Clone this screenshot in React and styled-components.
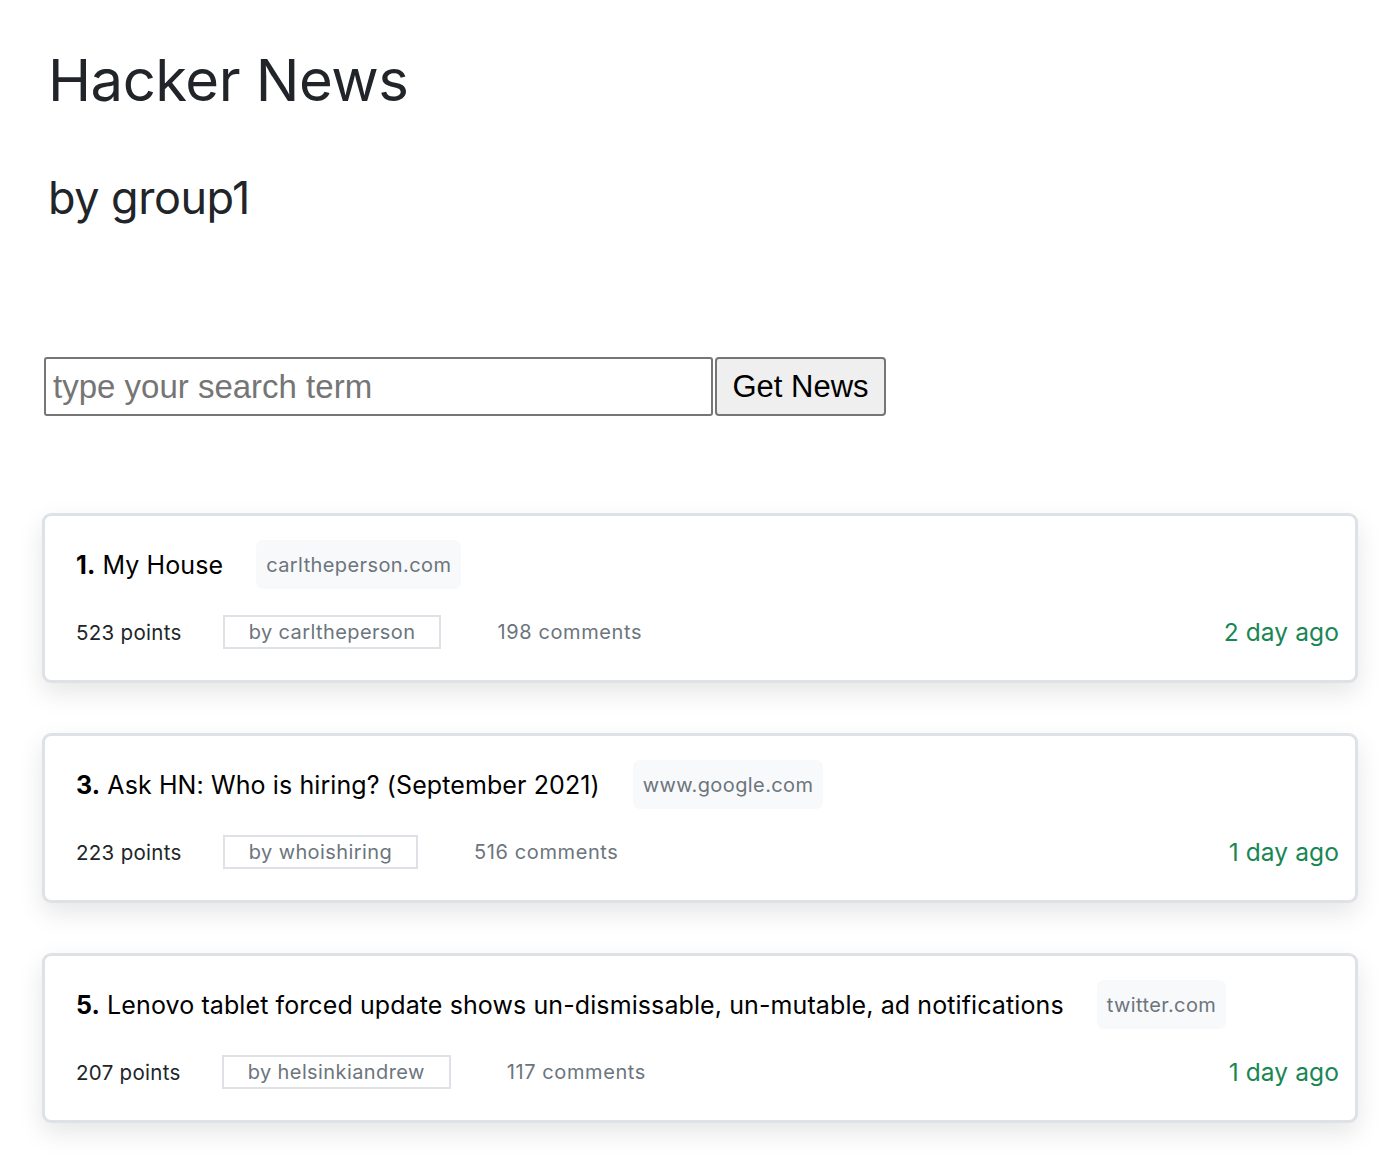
import React from "react";
import styled, { createGlobalStyle } from "styled-components";

const Global = createGlobalStyle`
  html, body { margin: 0; padding: 0; background: #fff; }
  body { font-family: Inter, "Noto Sans", sans-serif; color: #212529; }
  * { box-sizing: border-box; }
`;

const Page = styled.div`
  padding: 40px 32px 60px 42px;
  display: flex;
  flex-direction: column;
`;

const Title = styled.h1`
  margin: 0 0 0 6px;
  font-size: 58px;
  font-weight: 400;
  line-height: 80px;
  letter-spacing: -0.5px;
`;

const Subtitle = styled.h2`
  margin: 50px 0 0 6px;
  font-size: 45px;
  font-weight: 400;
  line-height: 56px;
  letter-spacing: -0.5px;
`;

const SearchForm = styled.form`
  display: flex;
  margin: 131px 0 0 2px;
`;

const SearchInput = styled.input`
  width: 669px;
  height: 59px;
  border: 2px solid #767676;
  border-radius: 3px;
  padding: 0 7px;
  font-family: "Liberation Sans", Arial, sans-serif;
  font-size: 33px;
  color: #212529;
  &::placeholder { color: #757575; }
`;

const SearchButton = styled.button`
  height: 59px;
  width: 171px;
  margin-left: 2px;
  border: 2px solid #767676;
  border-radius: 4px;
  background: #efefef;
  font-family: "Liberation Sans", Arial, sans-serif;
  font-size: 31px;
  color: #000;
  padding: 0 14px;
`;

const List = styled.div`
  display: flex;
  flex-direction: column;
  gap: 50px;
  margin-top: 97px;
`;

const Card = styled.div`
  width: 1316px;
  height: 170px;
  border: 3px solid #dee2e6;
  border-radius: 9px;
  background: #fff;
  box-shadow: 0 10px 26px rgba(0, 0, 0, 0.1);
  padding: 24px 16px 0 31px;
  display: flex;
  flex-direction: column;
`;

const TitleRow = styled.div`
  display: flex;
  align-items: center;
  gap: 33px;
  height: 49px;
`;

const StoryTitle = styled.div`
  font-size: 25px;
  color: #000;
  letter-spacing: 0.1px;
`;

const Rank = styled.b`
  font-weight: 700;
`;

const Domain = styled.span`
  background: #f8f9fa;
  border-radius: 7px;
  padding: 0 10px;
  height: 49px;
  display: flex;
  align-items: center;
  font-size: 20px;
  color: #6c757d;
  letter-spacing: 0.4px;
`;

const MetaRow = styled.div`
  display: flex;
  align-items: center;
  margin-top: 26px;
  height: 34px;
`;

const Points = styled.span`
  font-size: 20.5px;
  color: #212529;
  margin-right: 41px;
  letter-spacing: 0.3px;
`;

const Author = styled.span`
  border: 2px solid #dee2e6;
  height: 34px;
  padding: 0 24px;
  display: flex;
  align-items: center;
  font-size: 20px;
  color: #6c757d;
  margin-right: 56px;
  letter-spacing: 0.4px;
`;

const Comments = styled.span`
  font-size: 20px;
  color: #6c757d;
  letter-spacing: 0.6px;
`;

const Time = styled.span`
  margin-left: auto;
  font-size: 24.5px;
  color: #198754;
  letter-spacing: 0.1px;
`;

const stories = [
  { rank: 1, title: "My House", domain: "carltheperson.com", points: 523, author: "carltheperson", comments: 198, time: "2 day ago" },
  { rank: 3, title: "Ask HN: Who is hiring? (September 2021)", domain: "www.google.com", points: 223, author: "whoishiring", comments: 516, time: "1 day ago" },
  { rank: 5, title: "Lenovo tablet forced update shows un-dismissable, un-mutable, ad notifications", domain: "twitter.com", points: 207, author: "helsinkiandrew", comments: 117, time: "1 day ago" },
];

export default function App() {
  return (
    <>
      <Global />
      <Page>
        <Title>Hacker News</Title>
        <Subtitle>by group1</Subtitle>
        <SearchForm onSubmit={(e) => e.preventDefault()}>
          <SearchInput placeholder="type your search term" />
          <SearchButton type="submit">Get News</SearchButton>
        </SearchForm>
        <List>
          {stories.map((s) => (
            <Card key={s.rank}>
              <TitleRow>
                <StoryTitle>
                  <Rank>{s.rank}.</Rank> {s.title}
                </StoryTitle>
                <Domain>{s.domain}</Domain>
              </TitleRow>
              <MetaRow>
                <Points>{s.points} points</Points>
                <Author>by {s.author}</Author>
                <Comments>{s.comments} comments</Comments>
                <Time>{s.time}</Time>
              </MetaRow>
            </Card>
          ))}
        </List>
      </Page>
    </>
  );
}
